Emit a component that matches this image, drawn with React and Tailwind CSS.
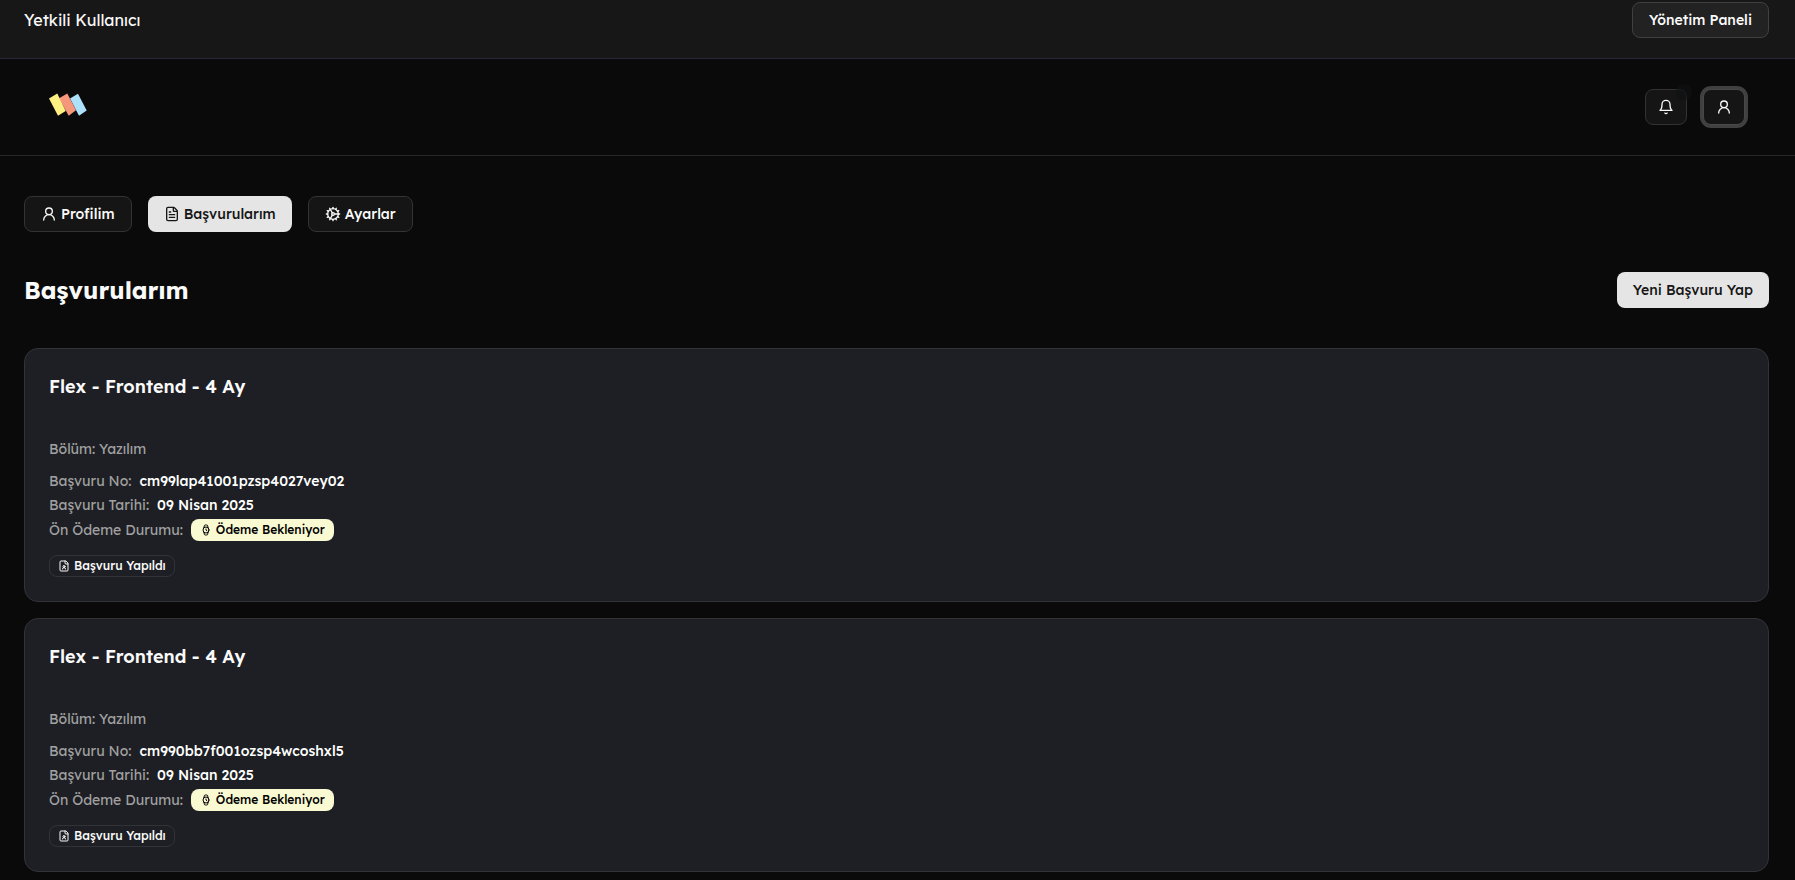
import React from "react";
import { UserRound, FileText, Cog, Watch } from "lucide-react";

const applications = [
  {
    id: "cm99lap41001pzsp4027vey02",
    title: "Flex - Frontend - 4 Ay",
    department: "Yazılım",
    date: "09 Nisan 2025",
  },
  {
    id: "cm990bb7f001ozsp4wcoshxl5",
    title: "Flex - Frontend - 4 Ay",
    department: "Yazılım",
    date: "09 Nisan 2025",
  },
];

const Logo = () => (
  <svg width="40" height="24" viewBox="0 0 40 24" aria-hidden="true">
    <path d="M22 5.5 30 .7 38.7 17.5 31 22.7Z" fill="#ade0fa" />
    <path d="M11 5.3 19.3.5 28 17.2 20.7 22.7Z" fill="#f6977c" />
    <path d="M1 5.5 9.3.5 17.7 18 10 22.7Z" fill="#fff083" />
  </svg>
);

const BellIcon = () => (
  <svg width="16" height="16" viewBox="0 0 24 24" fill="none" stroke="currentColor" strokeWidth="2" strokeLinecap="round" strokeLinejoin="round" aria-hidden="true">
    <path d="M6 8a6 6 0 0 1 12 0c0 7 3 9 3 9H3s3-2 3-9" />
    <path d="M10.3 21a1.94 1.94 0 0 0 3.4 0" />
  </svg>
);

const FileUserIcon = () => (
  <svg width="12" height="12" viewBox="0 0 24 24" fill="none" stroke="currentColor" strokeWidth="2" strokeLinecap="round" strokeLinejoin="round" aria-hidden="true">
    <path d="M15 2H6a2 2 0 0 0-2 2v16a2 2 0 0 0 2 2h12a2 2 0 0 0 2-2V7Z" />
    <path d="M14 2v4a2 2 0 0 0 2 2h4" />
    <path d="M15 18a3 3 0 1 0-6 0" />
    <circle cx="12" cy="13" r="2" />
  </svg>
);

const ApplicationCard = ({ application }) => (
  <article className="rounded-[14px] border border-[#323337] bg-[#1e1f24] p-6">
    <h3 className="text-lg leading-7 font-semibold">{application.title}</h3>
    <p className="mt-[38px] text-sm text-[#a1a1a1]">Bölüm: {application.department}</p>
    <dl className="mt-2.5 text-sm text-[#a1a1a1]">
      <div className="flex h-6 items-center gap-2">
        <dt>Başvuru No:</dt>
        <dd className="font-medium text-white">{application.id}</dd>
      </div>
      <div className="flex h-6 items-center gap-2">
        <dt>Başvuru Tarihi:</dt>
        <dd className="font-medium text-white">{application.date}</dd>
      </div>
      <div className="flex h-[26px] items-center gap-2">
        <dt>Ön Ödeme Durumu:</dt>
        <dd className="flex items-center gap-1 rounded-lg border border-transparent bg-[#fafad2] px-2 text-xs leading-5 font-medium text-black">
          <Watch size={12} />
          Ödeme Bekleniyor
        </dd>
      </div>
    </dl>
    <span className="mt-3 flex w-fit items-center gap-1 rounded-lg border border-[#323337] px-2 text-xs leading-5 font-medium">
      <FileUserIcon />
      Başvuru Yapıldı
    </span>
  </article>
);

const App = () => {
  return (
    <div className="min-h-screen bg-[#0a0a0a] font-['Lexend','Noto_Sans',sans-serif] text-[#fafafa]">
      <div className="flex items-start justify-between border-b border-[#27293a] bg-[#171717] pt-0.5 pr-[26px] pb-5 pl-6">
        <p className="py-1.5 text-base">Yetkili Kullanıcı</p>
        <button className="h-9 rounded-lg border border-[#404040] bg-[#222222] px-4 text-sm font-medium">
          Yönetim Paneli
        </button>
      </div>

      <header className="flex h-[97px] items-center justify-between border-b border-[#262626] pr-[50px] pl-12">
        <a href="#" aria-label="Ana sayfa" className="pb-1">
          <Logo />
        </a>
        <div className="flex items-center gap-4">
          <button aria-label="Bildirimler" className="relative flex h-9 items-center rounded-lg border border-[#333333] bg-[#151515] px-3">
            <BellIcon />
            <span className="absolute -top-1.5 -right-1.5 size-4 rounded-full bg-[#0d1014]/60" />
          </button>
          <button aria-label="Hesap" className="flex h-9 items-center rounded-lg border border-[#484848] bg-[#151515] px-3 ring-3 ring-[#404040]">
            <UserRound size={16} />
          </button>
        </div>
      </header>

      <main className="pt-10 pr-[26px] pb-2 pl-6">
        <nav className="flex gap-4 text-sm font-medium">
          <button className="flex h-9 items-center gap-1 rounded-lg border border-[#333333] bg-[#151515] px-4">
            <UserRound size={16} />
            Profilim
          </button>
          <button className="flex h-9 items-center gap-1 rounded-lg bg-[#e5e5e5] px-4 text-[#171717]">
            <FileText size={16} />
            Başvurularım
          </button>
          <button className="flex h-9 items-center gap-1 rounded-lg border border-[#333333] bg-[#151515] px-4">
            <Cog size={16} />
            Ayarlar
          </button>
        </nav>

        <div className="mt-10 flex items-center justify-between">
          <h2 className="text-2xl font-bold">Başvurularım</h2>
          <button className="h-9 rounded-lg bg-[#e5e5e5] px-4 text-sm font-medium text-[#171717]">
            Yeni Başvuru Yap
          </button>
        </div>

        <div className="mt-10 flex flex-col gap-4">
          {applications.map((application) => (
            <ApplicationCard key={application.id} application={application} />
          ))}
        </div>
      </main>
    </div>
  );
};

export default App;
